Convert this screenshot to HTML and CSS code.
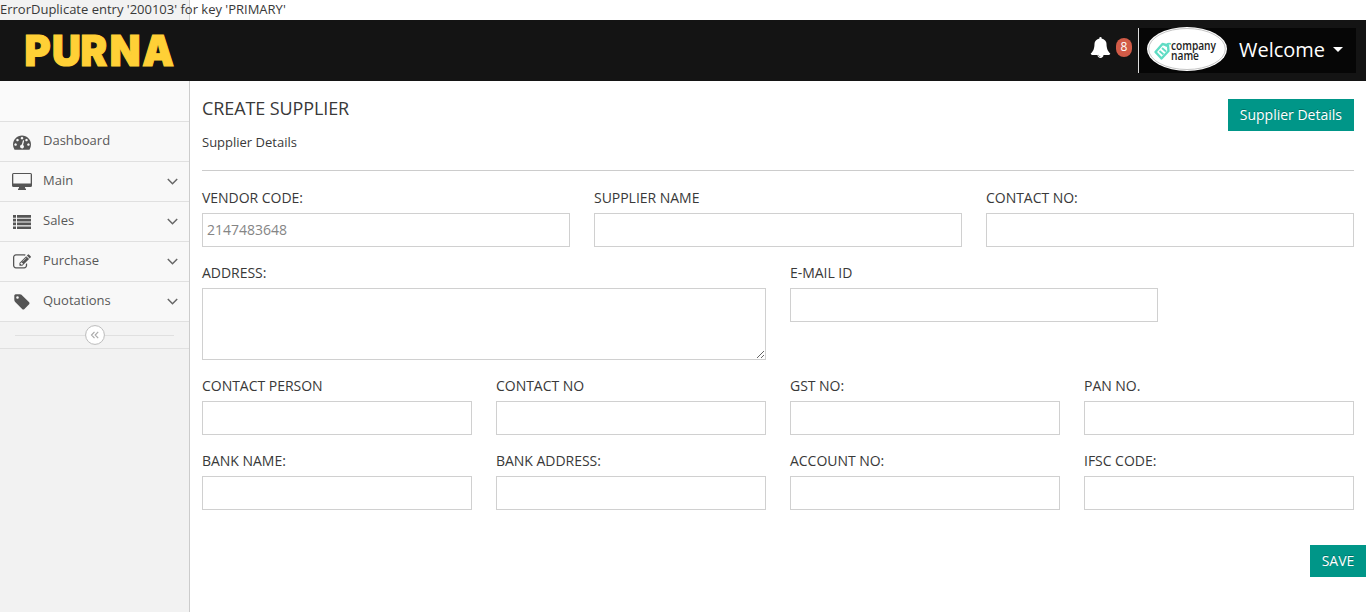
FILE: index.html
```html
<!DOCTYPE html>
<html lang="en">
<head>
<meta charset="utf-8">
<title>Create Supplier</title>
<link rel="stylesheet" href="styles.css">
</head>
<body>
<div class="page">
  <div class="error">ErrorDuplicate entry '200103' for key 'PRIMARY'</div>
  <header class="navbar">
    <svg class="brand" width="156" height="61" viewBox="0 0 156 61"><text transform="scale(.95 1)" x="2.600 31.600 61.500 92.500 126.500" y="46">PURNA</text></svg>
    <div class="nav-right">
      <svg class="bell" viewBox="0 0 1792 1792"><path d="M912 1696q0-16-16-16-59 0-101.500-42.500t-42.500-101.500q0-16-16-16t-16 16q0 73 51.500 124.500t124.500 51.500q16 0 16-16zm816-288q0 52-38 90t-90 38h-448q0 106-75 181t-181 75-181-75-75-181h-448q-52 0-90-38t-38-90q50-42 91-88t85-119.500 74.500-158.500 50-206 19.500-260q0-152 117-282.500t307-158.500q-8-19-8-39 0-40 28-68t68-28 68 28 28 68q0 20-8 39 190 28 307 158.500t117 282.500q0 139 19.500 260t50 206 74.500 158.500 85 119.500 91 88z"/></svg>
      <span class="badge">8</span>
      <div class="user">
        <svg class="company" width="80" height="44" viewBox="0 0 80 44">
          <ellipse cx="40" cy="22" rx="40" ry="22" fill="#fff"/>
          <ellipse cx="40" cy="22" rx="38.300" ry="20.500" fill="none" stroke="#aaa" stroke-width=".7"/>
          <path d="M8.500 25 15.500 17 21 18.500 21.500 24 14.500 31.500Z" fill="none" stroke="#5fdcc4" stroke-width="2.400" stroke-linejoin="round"/>
          <path d="M12.500 24l4 3.500M15 21l4 3.500M19 19.500q1-4 5-2.500" fill="none" stroke="#5fdcc4" stroke-width="1.800"/>
          <text x="24" y="22.500" textLength="45" lengthAdjust="spacingAndGlyphs">company</text>
          <text x="24" y="32.800" textLength="28" lengthAdjust="spacingAndGlyphs">name</text>
        </svg>
        <span class="welcome">Welcome</span>
        <span class="caret"></span>
      </div>
    </div>
  </header>
  <div class="body">
    <nav class="sidebar">
      <div class="shortcuts"></div>
      <a class="item"><svg class="icon" viewBox="0 0 1792 1792"><path d="M384 1152q0-53-37.500-90.500t-90.500-37.500-90.500 37.500-37.500 90.500 37.500 90.500 90.500 37.500 90.500-37.500 37.500-90.500zm192-448q0-53-37.500-90.500t-90.500-37.500-90.500 37.500-37.500 90.500 37.500 90.500 90.500 37.500 90.500-37.500 37.500-90.500zm428 481l101-382q6-26-7.500-48.500t-38.500-29.500-48 6.500-30 39.500l-101 382q-60 5-107 43.500t-63 98.500q-20 77 20 146t117 89 146-20 89-117q16-60-6-117t-72-91zm660-33q0-53-37.500-90.500t-90.500-37.500-90.500 37.500-37.500 90.500 37.500 90.500 90.500 37.500 90.500-37.500 37.500-90.500zm-640-640q0-53-37.500-90.500t-90.500-37.500-90.500 37.500-37.500 90.500 37.500 90.500 90.500 37.500 90.500-37.500 37.500-90.500zm448 192q0-53-37.500-90.500t-90.500-37.500-90.500 37.500-37.500 90.500 37.500 90.500 90.500 37.500 90.500-37.500 37.500-90.500zm320 448q0 261-141 483-19 29-54 29h-1402q-35 0-54-29-141-221-141-483 0-182 71-348t191-286 286-191 348-71 348 71 286 191 191 286 71 348z"/></svg><span>Dashboard</span></a>
      <a class="item"><svg class="icon wide" viewBox="0 0 20 18"><path fill-rule="evenodd" d="M1.500 1h17Q20 1 20 2.500v11Q20 15 18.500 15H13v1.500h1V18H6v-1.500h1V15H1.500Q0 15 0 13.500v-11Q0 1 1.500 1ZM1.300 2V11.500H18.700V2Z"/></svg><span>Main</span><svg class="chev" viewBox="0 0 11 7"><path d="M.8 1 5.500 5.700 10.200 1"/></svg></a>
      <a class="item"><svg class="icon" viewBox="0 0 18 18"><path d="M0 2h3v2.700H0zM4 2h14v2.700H4zM0 5.800h3v2.700H0zM4 5.800h14v2.700H4zM0 9.600h3v2.700H0zM4 9.600h14v2.700H4zM0 13.400h3v2.700H0zM4 13.400h14v2.700H4z"/></svg><span>Sales</span><svg class="chev" viewBox="0 0 11 7"><path d="M.8 1 5.500 5.700 10.200 1"/></svg></a>
      <a class="item"><svg class="icon" viewBox="0 0 1792 1792"><path d="M888 1184l116-116-152-152-116 116v56h96v96h56zm440-720q-16-16-33 1l-350 350q-17 17-1 33t33-1l350-350q17-17 1-33zm80 594v190q0 119-84.500 203.500t-203.500 84.500h-832q-119 0-203.500-84.500t-84.500-203.500v-832q0-119 84.500-203.500t203.500-84.500h832q63 0 117 25 15 7 18 23 3 17-9 29l-49 49q-14 14-32 8-23-6-45-6h-832q-66 0-113 47t-47 113v832q0 66 47 113t113 47h832q66 0 113-47t47-113v-126q0-13 9-22l64-64q15-15 35-7t20 29zm-96-738l288 288-672 672h-288v-288zm444 132l-92 92-288-288 92-92q28-28 68-28t68 28l152 152q28 28 28 68t-28 68z"/></svg><span>Purchase</span><svg class="chev" viewBox="0 0 11 7"><path d="M.8 1 5.500 5.700 10.200 1"/></svg></a>
      <a class="item"><svg class="icon" viewBox="0 0 1792 1792"><path d="M576 448q0-53-37.500-90.500t-90.500-37.500-90.500 37.500-37.500 90.500 37.500 90.500 90.500 37.500 90.500-37.500 37.500-90.500zm1067 576q0 53-37 90l-491 492q-39 37-91 37-53 0-90-37l-715-716q-38-37-64.500-101t-26.500-117v-416q0-52 38-90t90-38h416q53 0 117 26.500t102 64.500l715 714q37 39 37 91z"/></svg><span>Quotations</span><svg class="chev" viewBox="0 0 11 7"><path d="M.8 1 5.500 5.700 10.200 1"/></svg></a>
      <div class="collapse"><i></i><svg width="20" height="20" viewBox="0 0 20 20"><circle cx="10" cy="10" r="9.400" fill="#fff" stroke="#bbb"/><path d="M9.500 6.800 6.500 10l3 3.200M13.200 6.800 10.200 10l3 3.200" fill="none" stroke="#aaa" stroke-width="1.200"/></svg><i></i></div>
    </nav>
    <main class="content">
      <div class="head">
        <div><h1>CREATE SUPPLIER</h1><p>Supplier Details</p></div>
        <button class="btn">Supplier Details</button>
      </div>
      <form class="form">
        <label class="s4">VENDOR CODE:<input value="2147483648"></label>
        <label class="s4">SUPPLIER NAME<input></label>
        <label class="s4">CONTACT NO:<input></label>
        <label class="s6">ADDRESS:<textarea></textarea></label>
        <label class="s4">E-MAIL ID<input></label>
        <label class="s3 newrow">CONTACT PERSON<input></label>
        <label class="s3">CONTACT NO<input></label>
        <label class="s3">GST NO:<input></label>
        <label class="s3">PAN NO.<input></label>
        <label class="s3">BANK NAME:<input></label>
        <label class="s3">BANK ADDRESS:<input></label>
        <label class="s3">ACCOUNT NO:<input></label>
        <label class="s3">IFSC CODE:<input></label>
      </form>
      <div class="actions"><button class="btn save">SAVE</button></div>
    </main>
  </div>
</div>
</body>
</html>
```
FILE: styles.css
```css
* { box-sizing: border-box; }
body { margin: 0; font: 13px/20px "Open Sans", sans-serif; color: #393939; }
.page { height: 612px; overflow: hidden; display: flex; flex-direction: column; background: linear-gradient(90deg, #f2f2f2 189px, #ccc 189px, #ccc 190px, #fff 190px); }
.error { height: 20px; line-height: 19px; }
.navbar { height: 61px; flex: none; background: #141414; display: flex; justify-content: space-between; padding: 0 10px 0 22px; }
.brand { overflow: visible; }
.brand text { font: 900 42px Inter, sans-serif; fill: #ffd036; stroke: #ffd036; stroke-width: 1.2; }
.nav-right { display: flex; align-items: center; height: 45px; margin-top: 8px; }
.bell { width: 21px; height: 21px; fill: #fff; margin-top: -7px; }
.badge { width: 16px; height: 19px; margin: -6px 6px 0 5px; border-radius: 8px; background: #d15b47; color: #fff; font-size: 12px; line-height: 18px; text-align: center; }
.user { display: flex; align-items: center; width: 218px; height: 45px; padding-left: 8px; background: #060606; border-left: 1px solid #ddd; }
.company { flex: none; margin-top: -3px; }
.company text { font: 600 12px "Open Sans", sans-serif; fill: #222; }
.welcome { color: #fff; font-size: 20px; line-height: 40px; margin: -1px 0 0 12px; }
.caret { border: 5px solid transparent; border-top-color: #fff; border-bottom: 0; margin: -2px 0 0 8px; }
.body { display: flex; flex: 1; }
.sidebar { width: 189px; flex: none; margin-right: 1px; }
.shortcuts { height: 40px; background: #fafafa; }
.item { display: flex; align-items: center; height: 40px; border-top: 1px solid #e0e0e0; background: #f8f8f8; color: #585858; padding: 0 11px 0 13px; }
.item span { margin: -3px 0 0 12px; flex: 1; }
.icon { width: 18px; height: 18px; fill: #555; }
.icon.wide { width: 20px; margin: -2px -1px 0; }
.chev { width: 11px; height: 7px; fill: none; stroke: #666; stroke-width: 1.5; }
.collapse { height: 28px; border: solid #e0e0e0; border-width: 1px 0; display: flex; align-items: center; padding: 0 15px; background: #f3f3f3; }
.collapse i { flex: 1; height: 1px; background: #e0e0e0; }
.content { flex: 1; padding-left: 12px; }
.head { display: flex; justify-content: space-between; height: 90px; margin-right: 12px; padding-top: 18px; border-bottom: 1px solid #ccc; }
h1 { margin: 0; font-size: 18px; line-height: 19px; font-weight: 400; letter-spacing: -.1px; }
p { margin: 14px 0 0; }
.btn { height: 32px; border: 0; background: #009688; color: #fff; font: 14px/20px "Open Sans", sans-serif; padding: 0 12px; text-shadow: 0 -1px 0 rgba(0,0,0,.25); }
.save { width: 56px; padding: 0; }
.form { display: grid; grid-template-columns: repeat(12, 1fr); gap: 16px 24px; margin: 17px 12px 0 0; }
.form label { font-size: 14px; line-height: 20px; letter-spacing: -.03px; }
.form input, .form textarea { display: block; width: 100%; height: 34px; margin-top: 5px; padding: 3px 4px 5px; border: 1px solid #d0d0d0; background: #fff; color: #858585; font: 14px/20px "Open Sans", sans-serif; }
.form textarea { height: 72px; }
.s3 { grid-column: span 3; }
.s4 { grid-column: span 4; }
.s6 { grid-column: span 6; }
.newrow { grid-column: 1 / span 3; }
.actions { display: flex; justify-content: flex-end; margin-top: 35px; }
```
